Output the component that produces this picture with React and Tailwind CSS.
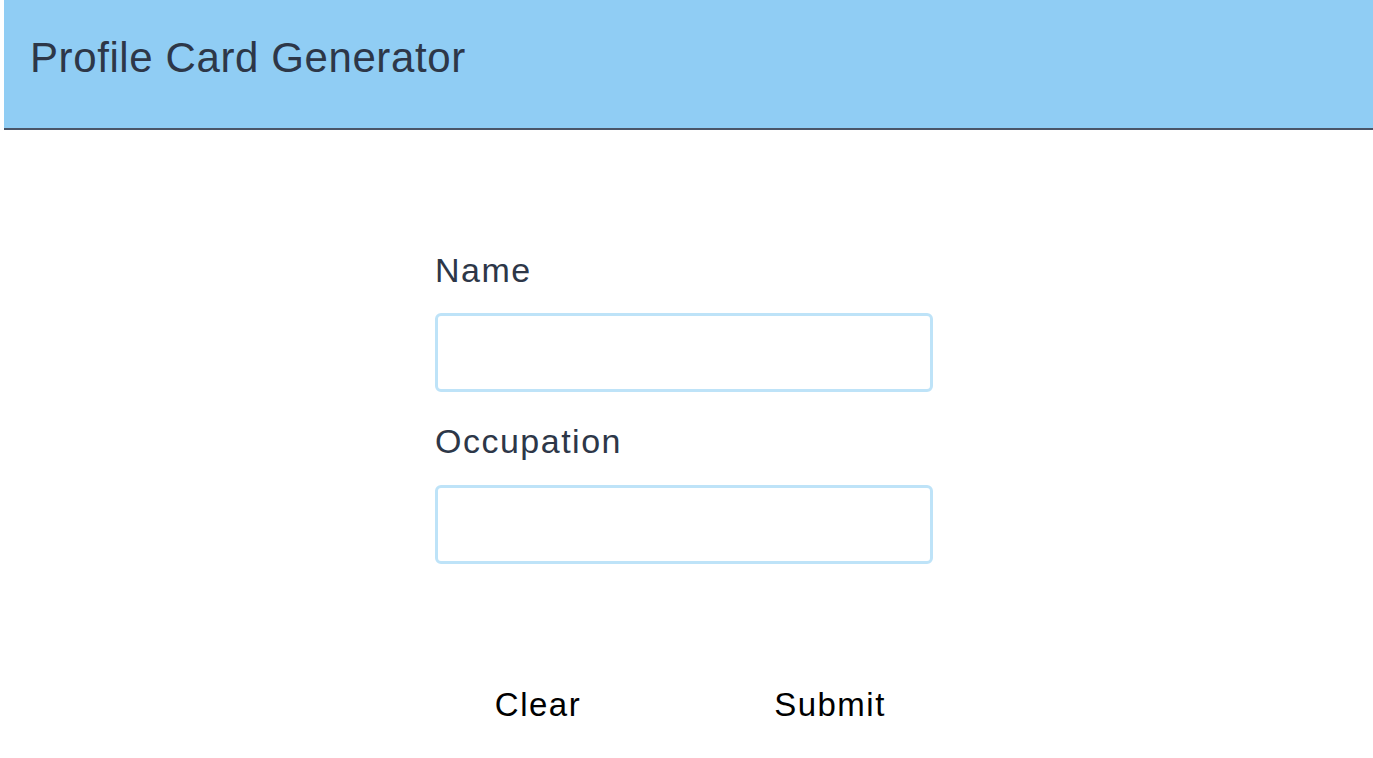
import React, { useState } from 'react';

const labelClasses = "block text-[34px] leading-[40px] tracking-[1.5px] text-[#2d3748]";
const inputClasses = "block w-full h-[79px] rounded-md border-[3px] border-[#bee3f8] bg-white px-3 text-[28px] text-[#2d3748] outline-none";
const buttonClasses = "w-[292px] text-[33px] leading-[40px] tracking-[1.5px] text-black";

const App = () => {
    const [name, setName] = useState('');
    const [occupation, setOccupation] = useState('');

    const clear = () => {
        setName('');
        setOccupation('');
    };

    return (
        <div className="min-h-screen bg-white" style={{ fontFamily: '"Liberation Sans", Arial, sans-serif' }}>
            <header className="ml-1 h-[130px] bg-[#90cdf4] border-b-2 border-[#4a5568] pl-[26px] pt-[33px]">
                <h1 className="text-[42px] leading-[50px] tracking-[0.6px] text-[#2d3748]">Profile Card Generator</h1>
            </header>

            <main className="pr-[5px] pt-[120px]">
                <form className="mx-auto w-[498px]" onSubmit={(e) => e.preventDefault()}>
                    <label htmlFor="name" className={labelClasses}>Name</label>
                    <input
                        id="name"
                        type="text"
                        value={name}
                        onChange={(e) => setName(e.target.value)}
                        className={`${inputClasses} mt-[23px]`}
                    />

                    <label htmlFor="occupation" className={`${labelClasses} mt-[29px]`}>Occupation</label>
                    <input
                        id="occupation"
                        type="text"
                        value={occupation}
                        onChange={(e) => setOccupation(e.target.value)}
                        className={`${inputClasses} mt-[24px]`}
                    />
                </form>

                <div className="mt-[121px] flex justify-center">
                    <button type="button" onClick={clear} className={buttonClasses}>
                        Clear
                    </button>
                    <button type="submit" className={buttonClasses}>
                        Submit
                    </button>
                </div>
            </main>
        </div>
    );
};

export default App;
